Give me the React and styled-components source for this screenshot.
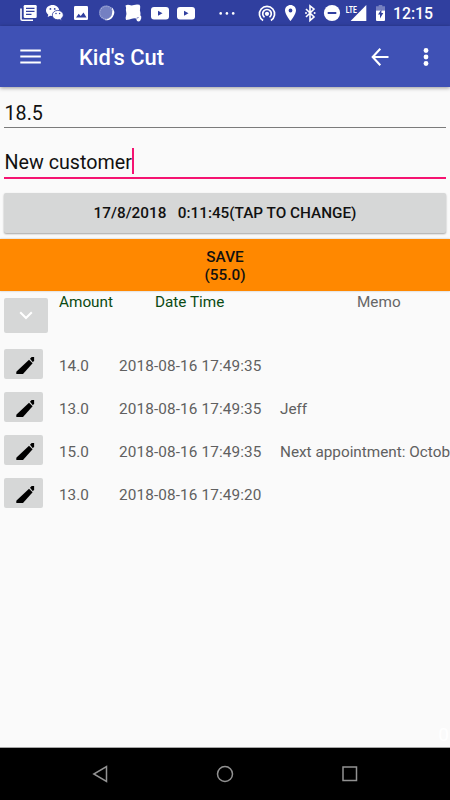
import React from "react";
import styled, { createGlobalStyle } from "styled-components";

const Global = createGlobalStyle`
  * { box-sizing: border-box; }
  body { margin: 0; background: #fafafa; overflow: hidden; }
`;

const Screen = styled.div`
  width: 450px;
  height: 800px;
  display: flex;
  flex-direction: column;
  overflow: hidden;
  background: #fafafa;
  font-family: Roboto, "Liberation Sans", sans-serif;
`;

const StatusBar = styled.header`
  flex: none;
  height: 26px;
  display: flex;
  align-items: center;
  background: #303f9f;
  color: #fff;
`;

const StatusGlyph = styled.svg`
  flex: none;
  width: ${(p) => p.$w}px;
  height: 18px;
  margin-left: ${(p) => p.$gap}px;
  fill: #fff;
  overflow: visible;
`;

const Clock = styled.time`
  margin-left: 8px;
  padding-top: 2px;
  font-size: 15.8px;
  line-height: 18px;
  font-weight: 500;
`;

const AppBar = styled.nav`
  flex: none;
  height: 61px;
  display: flex;
  align-items: center;
  padding: 1px 21px 0 20px;
  background: #3f51b5;
  color: #fff;
  box-shadow: 0 1px 4px rgba(0, 0, 0, 0.4);
`;

const BarIcon = styled.svg`
  flex: none;
  width: ${(p) => p.$w}px;
  height: 20px;
  margin-left: ${(p) => p.$gap || 0}px;
  fill: none;
  stroke: #fff;
  stroke-width: 2.1;
`;

const Title = styled.h1`
  flex: 1;
  margin: 0 0 0 38px;
  padding-top: 2px;
  font-size: 21.9px;
  line-height: 28px;
  font-weight: 500;
`;

const Field = styled.div`
  flex: none;
  display: flex;
  align-items: center;
  height: ${(p) => p.$h}px;
  margin: ${(p) => p.$top}px 4px 0;
  padding-left: 0.5px;
  padding-top: ${(p) => p.$drop}px;
  border-bottom: ${(p) => (p.$focused ? "2px solid #f51371" : "1px solid #7b7b7b")};
  font-size: 19.7px;
  color: #111;
  white-space: nowrap;
`;

const Caret = styled.span`
  width: 2px;
  height: 26px;
  margin-bottom: 3px;
  background: #f51371;
`;

const DateButton = styled.button`
  flex: none;
  height: 40px;
  margin: 14px 4px 0 4px;
  padding: 0;
  border: 0;
  border-radius: 2px;
  background: #d6d7d7;
  box-shadow: 0 1px 2px rgba(0, 0, 0, 0.35);
  font: 500 15.3px/18px Roboto, sans-serif;
  color: #111;
  white-space: pre;
`;

const SaveButton = styled.button`
  flex: none;
  height: 52px;
  margin-top: 6px;
  padding: 1px 0 0;
  border: 0;
  background: #ff8800;
  box-shadow: 0 0 2px rgba(0, 0, 0, 0.25);
  font: 500 15.3px/18px Roboto, sans-serif;
  color: #111;
  white-space: pre-line;
`;

const HeaderRow = styled.div`
  flex: none;
  height: 58px;
  display: grid;
  grid-template-columns: 55px 60px 150px 1fr;
  padding-left: 4px;
  align-items: start;
  font-size: 15.3px;
  line-height: 18px;
  color: #666;
`;

const HeaderCell = styled.span`
  padding-top: 2px;
  padding-left: ${(p) => p.$indent || 0}px;
  color: ${(p) => (p.$sortable ? "#0b4a12" : "#666")};
`;

const ExpandButton = styled.button`
  display: flex;
  align-items: center;
  justify-content: center;
  width: 44px;
  height: 35px;
  margin-top: 7px;
  padding: 0;
  border: 0;
  border-radius: 2px;
  background: #d6d7d7;
`;

const Row = styled.div`
  flex: none;
  height: 43px;
  display: grid;
  grid-template-columns: 55px 60px 161px 1fr;
  padding-left: 4px;
  align-items: start;
  font-size: 15.3px;
  line-height: 18px;
  color: #606060;
  white-space: nowrap;
`;

const Cell = styled.span`
  padding-top: 8px;
  letter-spacing: ${(p) => p.$track || 0}px;
`;

const EditButton = styled.button`
  width: 39px;
  height: 30px;
  padding: 0;
  border: 0;
  border-radius: 2px;
  background: #d6d7d7;
`;

const EditIcon = styled.svg`
  display: block;
  width: 39px;
  height: 30px;
`;

const Ghost = styled.div`
  margin-top: auto;
  padding: 0 1px 0;
  text-align: right;
  font-size: 19px;
  line-height: 24px;
  color: #fff;
`;

const NavBar = styled.footer`
  flex: none;
  height: 53px;
  display: flex;
  align-items: center;
  justify-content: space-between;
  padding: 0 92px 1px;
  border-top: 1px solid #a5a5a5;
  background: #000;
`;

const NavIcon = styled.svg`
  width: 16px;
  height: 18px;
  fill: none;
  stroke: #929292;
  stroke-width: 1.5;
  overflow: visible;
`;

const rows = [
  ["14.0", "2018-08-16 17:49:35", ""],
  ["13.0", "2018-08-16 17:49:35", "Jeff"],
  ["15.0", "2018-08-16 17:49:35", "Next appointment: October"],
  ["13.0", "2018-08-16 17:49:20", ""],
];

function Video({ gap }) {
  return (
    <StatusGlyph $w={18} $gap={gap} viewBox="0 0 18 18">
      <rect x="0" y="3" width="18" height="12.5" rx="3" />
      <path d="M7 6.8v5l4.5-2.5z" fill="#303f9f" />
    </StatusGlyph>
  );
}

function StatusIcons() {
  return (
    <>
      <StatusGlyph $w={17} $gap={20} viewBox="0 0 17 18">
        <path d="M1 4.5V15q0 1.3 1.3 1.3H13" fill="none" stroke="#fff" strokeWidth="1.6" />
        <rect x="3.7" y="1" width="13" height="13" rx="1.3" />
        <path d="M6 4.4h8.5M6 7.4h8.5M6 10.4h5.5" stroke="#303f9f" strokeWidth="1.2" />
      </StatusGlyph>
      <StatusGlyph $w={17} $gap={9} viewBox="0 0 17 18">
        <path d="M6.6 1C3 1 0 3.3 0 6.5c0 1.7.9 3.1 2.3 4.2L1.7 13l2.5-1.3c.8.2 1.6.3 2.4.3 3.7 0 6.6-2.5 6.6-5.5S10.3 1 6.6 1z" />
        <path d="M11.8 6.4c-3.1 0-5.5 2.1-5.5 4.7s2.4 4.7 5.5 4.7c.6 0 1.2-.1 1.8-.3l2 1-.5-1.8c1.2-.9 2.2-2.1 2.2-3.6 0-2.6-2.500-4.700-5.500-4.700z" stroke="#303f9f" strokeWidth=".8" />
        <g fill="#303f9f">
          <circle cx="4.4" cy="4.9" r=".9" />
          <circle cx="8.7" cy="4.9" r=".9" />
          <circle cx="10" cy="9.6" r=".75" />
          <circle cx="13.6" cy="9.6" r=".75" />
        </g>
      </StatusGlyph>
      <StatusGlyph $w={14} $gap={11} viewBox="0 0 14 18">
        <rect y="2" width="14" height="14" rx="1.3" />
        <path d="M2 13.400l2.700-3.600 2 2.300L9.500 8.600l3 4.800z" fill="#303f9f" />
      </StatusGlyph>
      <StatusGlyph $w={16} $gap={11} viewBox="0 0 16 18">
        <circle cx="7.300" cy="8.700" r="7.200" fill="#7480c2" />
        <circle cx="7.300" cy="8.700" r="6.500" fill="none" stroke="#a9b1db" strokeWidth="1.200" strokeDasharray="1 1" />
        <path d="M12.800 3.200a7.500 7.500 0 0 1-7.600 12.500q5 0 7.500-4.400 1.500-4 .1-8.100z" />
      </StatusGlyph>
      <StatusGlyph $w={17} $gap={10} viewBox="0 0 17 18">
        <path d="M.5 1.500Q2.500.2 4.500 1t4.500 0 5.500-.2q1.200 1.600.6 3.700-.5 2 .2 3.500.4 1.700 0 3.200 1.500 1 .9 3.300-.7 3-2.800 3-1.800 0-2.300-3-2.600-.4-4.300.2-2 1-5.800 1.200Q.2 14 1 12t.2-4-.1-4z" />
        <path d="M11.600 14.200l2-.7" fill="none" stroke="#303f9f" strokeWidth=".7" />
      </StatusGlyph>
      <Video gap={9} />
      <Video gap={8} />
      <StatusGlyph $w={16} $gap={24} viewBox="0 0 16 18">
        <circle cx="1.700" cy="9.400" r="1.300" />
        <circle cx="7.900" cy="9.400" r="1.300" />
        <circle cx="14.200" cy="9.400" r="1.300" />
      </StatusGlyph>
      <StatusGlyph $w={17} $gap={24} viewBox="0 0 17 18">
        <circle cx="8" cy="9.800" r="2.100" />
        <g fill="none" stroke="#fff" strokeWidth="1.700">
          <path d="M5.500 13.300a4.300 4.300 0 1 1 5 0" />
          <path d="M4.100 16.500a7.600 7.600 0 1 1 7.800 0" />
        </g>
      </StatusGlyph>
      <StatusGlyph $w={11} $gap={9} viewBox="0 0 11 18">
        <path fillRule="evenodd" d="M5.500 1C2.400 1 0 3.400 0 6.400c0 4 5.500 10.600 5.500 10.600S11 10.400 11 6.400C11 3.400 8.600 1 5.500 1zm0 3.600a1.900 1.900 0 1 1 0 3.800 1.900 1.900 0 0 1 0-3.800z" />
      </StatusGlyph>
      <StatusGlyph $w={11} $gap={9} viewBox="0 0 11 18">
        <path d="M1 5l8 8-4 3.400V1.800L9 5l-8 8" fill="none" stroke="#fff" strokeWidth="1.600" />
        <circle cx="1" cy="9.100" r="1" />
        <circle cx="9.600" cy="9.100" r="1" />
      </StatusGlyph>
      <StatusGlyph $w={16} $gap={8} viewBox="0 0 16 18">
        <circle cx="8" cy="9" r="8.100" />
        <rect x="3.700" y="8" width="8.600" height="2" fill="#303f9f" />
      </StatusGlyph>
      <StatusGlyph $w={21} $gap={6} viewBox="0 0 21 18">
        <path d="M20.300 1v16H4.600z" />
        <text x="-.2" y="8.600" fontSize="9.600" fontWeight="700" textLength="11" lengthAdjust="spacingAndGlyphs" stroke="#303f9f" strokeWidth="1.500" paintOrder="stroke">LTE</text>
      </StatusGlyph>
      <StatusGlyph $w={9} $gap={9} viewBox="0 0 9 18">
        <path d="M2.700 1h3.600v1.300H9v4.200H0V2.300h2.700z" fill="#7680c0" />
        <path d="M0 6.500h9V16q0 1-1 1H1q-1 0-1-1z" />
        <path d="M5.400 5.500L2 10.500h2v4l3.300-5.500H5.400z" fill="#303f9f" />
      </StatusGlyph>
    </>
  );
}

export default function App() {
  return (
    <Screen>
      <Global />
      <StatusBar>
        <StatusIcons />
        <Clock>12:15</Clock>
      </StatusBar>
      <AppBar>
        <BarIcon $w={21} viewBox="0 0 21 20">
          <path d="M.3 3.500h20.500M.3 9.500h20.500M.3 15.500h20.500" />
        </BarIcon>
        <Title>Kid's Cut</Title>
        <BarIcon $w={18} viewBox="0 0 18 20">
          <path d="M9.300 1.800L1.700 10l7.600 8.200M2 10h15.500" />
        </BarIcon>
        <BarIcon $w={6} $gap={34} viewBox="0 0 6 20">
          <g fill="#fff" stroke="none">
            <circle cx="3" cy="3.500" r="2.400" />
            <circle cx="3" cy="10" r="2.400" />
            <circle cx="3" cy="16.500" r="2.400" />
          </g>
        </BarIcon>
      </AppBar>
      <Field $h={30} $top={11} $drop={2}>18.5</Field>
      <Field $h={35} $top={16} $drop={3} $focused>
        New customer
        <Caret />
      </Field>
      <DateButton>{"17/8/2018   0:11:45(TAP TO CHANGE)"}</DateButton>
      <SaveButton>{"SAVE\n(55.0)"}</SaveButton>
      <HeaderRow>
        <ExpandButton aria-label="Expand">
          <svg width="14" height="9" viewBox="0 0 14 9">
            <path d="M1.200 1.200L7 7l5.800-5.800" fill="none" stroke="#fff" strokeWidth="2" />
          </svg>
        </ExpandButton>
        <HeaderCell $sortable>Amount</HeaderCell>
        <HeaderCell $sortable $indent={36}>Date Time</HeaderCell>
        <HeaderCell $indent={88}>Memo</HeaderCell>
      </HeaderRow>
      {rows.map(([amount, date, memo], i) => (
        <Row key={i}>
          <EditButton aria-label="Edit">
            <EditIcon viewBox="0 0 39 30">
              <path d="M12.300 25.100v-2.400L25 10.700l3.600 3.600-9.600 10.800z" />
              <path d="M26 9.800l1.600-1.700 2.500-.1v3.800l-1.300 1.400z" />
            </EditIcon>
          </EditButton>
          <Cell>{amount}</Cell>
          <Cell $track={0.13}>{date}</Cell>
          <Cell>{memo}</Cell>
        </Row>
      ))}
      <Ghost>0</Ghost>
      <NavBar>
        <NavIcon viewBox="0 0 16 18">
          <path d="M14.500 1.500v15L1.800 9z" />
        </NavIcon>
        <NavIcon viewBox="0 0 16 18">
          <circle cx="8" cy="9" r="7.500" />
        </NavIcon>
        <NavIcon viewBox="0 0 16 18">
          <rect x="1" y="2" width="13.500" height="13.500" />
        </NavIcon>
      </NavBar>
    </Screen>
  );
}
